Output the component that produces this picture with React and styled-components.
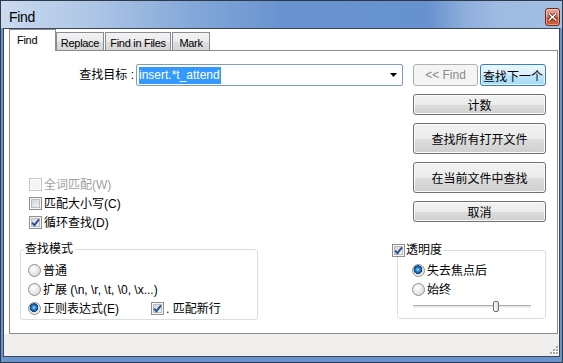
import React from "react";
import styled, { createGlobalStyle, css } from "styled-components";

const GlobalStyle = createGlobalStyle`
  html, body {
    margin: 0;
    padding: 0;
    background: #fff;
  }
  body {
    font-family: "Liberation Sans", "Noto Sans CJK SC", sans-serif;
  }
  * {
    box-sizing: border-box;
  }
`;

const Window = styled.div`
  width: 563px;
  height: 363px;
  border: 1px solid #2e3a4a;
  background: #6a94cf;
  display: flex;
  flex-direction: column;
`;

const TitleBar = styled.div`
  height: 27px;
  flex: none;
  display: flex;
  align-items: center;
  justify-content: space-between;
  padding: 4px 2px 0 8px;
  background: linear-gradient(
    to right,
    #cbdaef 0%,
    #aec6e6 16%,
    #84a8d9 34%,
    #6993d0 50%,
    #6692d0 76%,
    #90afdc 83%,
    #a0bbe2 89%,
    #a3bee3 100%
  );
  font: 14px "Liberation Sans", sans-serif;
  letter-spacing: -0.3px;
  color: #000;
`;

const CloseButton = styled.div`
  width: 15px;
  height: 18px;
  border: 1px solid #6b2a1f;
  border-radius: 3px;
  background: linear-gradient(#e9a899 0%, #dc7c62 45%, #c9492b 55%, #d0603e 100%);
  box-shadow: inset 0 0 0 1px rgba(255, 220, 210, 0.5);
  display: flex;
  align-items: center;
  justify-content: center;
`;

const Client = styled.div`
  flex: 1;
  margin: 0 2px 5px 2px;
  border: 1px solid #3c4654;
  background: #fff;
  display: flex;
  flex-direction: column;
`;

const TabStrip = styled.div`
  height: 21px;
  flex: none;
  display: flex;
  align-items: flex-end;
  padding-left: 5px;
`;

const Tab = styled.div`
  width: ${(p) => p.$w}px;
  margin-left: ${(p) => p.$gap || 0}px;
  height: ${(p) => (p.$active ? 22 : 18)}px;
  margin-bottom: ${(p) => (p.$active ? -1 : 0)}px;
  border: 1px solid #898c95;
  border-bottom: none;
  position: relative;
  z-index: ${(p) => (p.$active ? 1 : 0)};
  background: ${(p) =>
    p.$active ? "#fff" : "linear-gradient(#f3f3f3 0%, #ebebeb 50%, #dedede 51%, #d6d6d6 100%)"};
  display: flex;
  align-items: center;
  justify-content: ${(p) => (p.$active ? "flex-start" : "center")};
  padding: ${(p) => (p.$active ? "0 0 1px 7px" : "2px 0 0 0")};
  font-size: 11px;
  letter-spacing: -0.3px;
  color: #000;
`;

const Panel = styled.div`
  height: 284px;
  flex: none;
  margin: 0 1px 0 5px;
  border: 1px solid #898c95;
  padding: 13px 11px 0 10px;
  display: flex;
  flex-direction: column;
  font-size: 12px;
  color: #000;
`;

const TopSection = styled.div`
  display: flex;
  justify-content: space-between;
  align-items: flex-start;
`;

const LeftColumn = styled.div`
  width: 383px;
  display: flex;
  flex-direction: column;
`;

const SearchRow = styled.div`
  height: 22px;
  display: flex;
  align-items: center;
  justify-content: flex-end;
`;

const FieldLabel = styled.span`
  margin-right: 2px;
  line-height: 14px;
`;

const Combo = styled.div`
  width: 267px;
  height: 22px;
  border: 1px solid #7f9db9;
  border-radius: 2px;
  background: #fff;
  display: flex;
  align-items: center;
  padding-left: 2px;
`;

const Selection = styled.span`
  background: #3399ff;
  color: #fff;
  line-height: 17px;
  padding: 0 1px 0 0;
`;

const DropArrow = styled.span`
  margin-left: auto;
  width: 18px;
  height: 100%;
  display: flex;
  align-items: center;
  justify-content: center;
`;

const CheckList = styled.div`
  margin-top: 89px;
  padding-left: 9px;
  display: flex;
  flex-direction: column;
`;

const OptionRow = styled.label`
  height: 19px;
  display: flex;
  align-items: center;
  gap: 2px;
  line-height: 14px;
  width: ${(p) => (p.$w ? `${p.$w}px` : "auto")};
  color: ${(p) => (p.$disabled ? "#a0a0a0" : "#000")};
`;

const ModeRow = styled.div`
  display: flex;
  align-items: center;
`;

const Box = styled.span`
  width: 13px;
  height: 13px;
  flex: none;
  border: 1px solid ${(p) => (p.$disabled ? "#c5c5c5" : "#8e8f8f")};
  background: ${(p) =>
    p.$disabled ? "#f4f4f4" : "linear-gradient(135deg, #c9cdd3 0%, #e4e6e8 55%, #f7f7f7 100%)"};
  box-shadow: ${(p) =>
    p.$disabled ? "inset 0 0 0 1px #fff" : "inset 0 0 0 1px #f6f6f6, inset 0 0 0 2px #b9bdc2"};
  display: flex;
  align-items: center;
  justify-content: center;
`;

const RadioDot = styled.span`
  width: 13px;
  height: 13px;
  flex: none;
  border-radius: 50%;
  border: 1px solid #8e8f8f;
  background: radial-gradient(circle at 40% 35%, #ffffff 0%, #e6e6e6 55%, #cfcfcf 100%);
  ${(p) =>
    p.$checked &&
    css`
      background: radial-gradient(
        circle at 45% 42%,
        #b9e3fc 0px,
        #3a95dc 1.6px,
        #135aa6 3.3px,
        #0c3b72 4.1px,
        #e4e4e4 4.6px,
        #f8f8f8 100%
      );
    `}
`;

const ButtonColumn = styled.div`
  width: 133px;
  display: flex;
  flex-direction: column;
  gap: 8px;
`;

const ButtonPair = styled.div`
  display: flex;
  gap: 2px;
`;

const Button = styled.button`
  width: ${(p) => (p.$w ? `${p.$w}px` : "100%")};
  height: ${(p) => p.$h || 21}px;
  padding: 0;
  border: 1px solid #707070;
  border-radius: 3px;
  background: linear-gradient(#f2f2f2 0%, #ebebeb 50%, #dddddd 51%, #cfcfcf 100%);
  box-shadow: inset 0 0 0 1px #fbfbfb;
  font: 12px "Liberation Sans", "Noto Sans CJK SC", sans-serif;
  color: #000;
  ${(p) =>
    p.$focus &&
    css`
      border-color: #3c7fb1;
      background: linear-gradient(#eaf6fd 0%, #d9f0fc 50%, #bee6fd 51%, #a7d9f5 100%);
      box-shadow: inset 0 0 0 1px #e4f5fe;
    `}
  &:disabled {
    border-color: #adb2b5;
    background: #f4f4f4;
    box-shadow: none;
    color: #8a8a8a;
  }
`;

const BottomSection = styled.div`
  margin-top: 10px;
  display: flex;
  justify-content: space-between;
  align-items: flex-start;
`;

const GroupBox = styled.fieldset`
  margin: ${(p) => p.$top || 0}px 0 0 0;
  min-width: 0;
  width: ${(p) => p.$w}px;
  border: 1px solid #d5dfe5;
  border-radius: 3px;
  padding: ${(p) => p.$padTop}px 0 ${(p) => p.$padBottom}px ${(p) => p.$padLeft}px;
`;

const Legend = styled.legend`
  margin-left: ${(p) => p.$shift}px;
  padding: 0 2px 0 0;
  line-height: 14px;
  display: flex;
  align-items: center;
  gap: 1px;
`;

const SliderRow = styled.div`
  height: 14px;
  margin-left: 1px;
  width: 118px;
  display: flex;
  align-items: center;
`;

const Track = styled.div`
  position: relative;
  width: 100%;
  height: 3px;
  border-top: 1px solid #b0b0b0;
  border-bottom: 1px solid #f2f2f2;
  background: #e3e3e3;
`;

const Thumb = styled.div`
  position: absolute;
  top: -5px;
  width: 6px;
  height: 11px;
  margin-left: -3px;
  border: 1px solid #6f6f6f;
  border-radius: 2px;
  background: linear-gradient(to right, #fdfdfd, #dcdcdc);
`;

const StatusBar = styled.div`
  flex: 1;
  background: #f0efed;
  display: flex;
  justify-content: flex-end;
  align-items: flex-end;
  padding: 0 0 1px 0;
`;

function CheckMark() {
  return (
    <svg width="9" height="9" viewBox="0 0 9 9">
      <path d="M1 4.6 L3.4 7.2 L8 1.4" fill="none" stroke="#2f4f94" strokeWidth="1.9" />
    </svg>
  );
}

function Checkbox({ checked, disabled }) {
  return <Box $disabled={disabled}>{checked && <CheckMark />}</Box>;
}

function CloseGlyph() {
  return (
    <svg width="9" height="8" viewBox="0 0 9 8">
      <path d="M1.2 1 L7.8 7 M7.8 1 L1.2 7" stroke="#4a1a12" strokeWidth="3" strokeLinecap="square" />
      <path d="M1.2 1 L7.8 7 M7.8 1 L1.2 7" stroke="#fff" strokeWidth="1.6" strokeLinecap="square" />
    </svg>
  );
}

function Grip() {
  const dots = [
    [7, 1],
    [7, 4],
    [4, 4],
    [7, 7],
    [4, 7],
    [1, 7],
  ];
  return (
    <svg width="10" height="10" viewBox="0 0 10 10">
      {dots.map(([x, y]) => (
        <g key={`${x}-${y}`}>
          <rect x={x + 1} y={y + 1} width="2" height="2" fill="#fff" />
          <rect x={x} y={y} width="2" height="2" fill="#a7a6a4" />
        </g>
      ))}
    </svg>
  );
}

const tabs = [
  { label: "Find", w: 47, active: true },
  { label: "Replace", w: 48 },
  { label: "Find in Files", w: 66, gap: 1 },
  { label: "Mark", w: 38, gap: 1 },
];

export default function App() {
  const opacity = 0.7;

  return (
    <>
      <GlobalStyle />
      <Window>
        <TitleBar>
          <span>Find</span>
          <CloseButton>
            <CloseGlyph />
          </CloseButton>
        </TitleBar>
        <Client>
          <TabStrip>
            {tabs.map((t) => (
              <Tab key={t.label} $w={t.w} $gap={t.gap} $active={t.active}>
                {t.label}
              </Tab>
            ))}
          </TabStrip>
          <Panel>
            <TopSection>
              <LeftColumn>
                <SearchRow>
                  <FieldLabel>查找目标 :</FieldLabel>
                  <Combo>
                    <Selection>insert.*t_attend</Selection>
                    <DropArrow>
                      <svg width="7" height="4" viewBox="0 0 7 4">
                        <path d="M0 0 H7 L3.5 4 Z" fill="#000" />
                      </svg>
                    </DropArrow>
                  </Combo>
                </SearchRow>
                <CheckList>
                  <OptionRow $disabled>
                    <Checkbox disabled />
                    全词匹配(W)
                  </OptionRow>
                  <OptionRow>
                    <Checkbox />
                    匹配大小写(C)
                  </OptionRow>
                  <OptionRow>
                    <Checkbox checked />
                    循环查找(D)
                  </OptionRow>
                </CheckList>
              </LeftColumn>
              <ButtonColumn>
                <ButtonPair>
                  <Button $w={65} $h={22} disabled>
                    &lt;&lt; Find
                  </Button>
                  <Button $w={66} $h={22} $focus>
                    查找下一个
                  </Button>
                </ButtonPair>
                <Button>计数</Button>
                <Button $h={31}>查找所有打开文件</Button>
                <Button $h={31}>在当前文件中查找</Button>
                <Button>取消</Button>
              </ButtonColumn>
            </TopSection>
            <BottomSection>
              <GroupBox $w={238} $padTop={5} $padBottom={1} $padLeft={7}>
                <Legend $shift={-3}>查找模式</Legend>
                <OptionRow>
                  <RadioDot />
                  普通
                </OptionRow>
                <OptionRow>
                  <RadioDot />
                  扩展 (\n, \r, \t, \0, \x...)
                </OptionRow>
                <ModeRow>
                  <OptionRow $w={123}>
                    <RadioDot $checked />
                    正则表达式(E)
                  </OptionRow>
                  <OptionRow>
                    <Checkbox checked />
                    . 匹配新行
                  </OptionRow>
                </ModeRow>
              </GroupBox>
              <GroupBox $w={149} $top={1} $padTop={4} $padBottom={5} $padLeft={14}>
                <Legend $shift={-20}>
                  <Checkbox checked />
                  透明度
                </Legend>
                <OptionRow>
                  <RadioDot $checked />
                  失去焦点后
                </OptionRow>
                <OptionRow>
                  <RadioDot />
                  始终
                </OptionRow>
                <SliderRow>
                  <Track>
                    <Thumb style={{ left: `${opacity * 100}%` }} />
                  </Track>
                </SliderRow>
              </GroupBox>
            </BottomSection>
          </Panel>
          <StatusBar>
            <Grip />
          </StatusBar>
        </Client>
      </Window>
    </>
  );
}
